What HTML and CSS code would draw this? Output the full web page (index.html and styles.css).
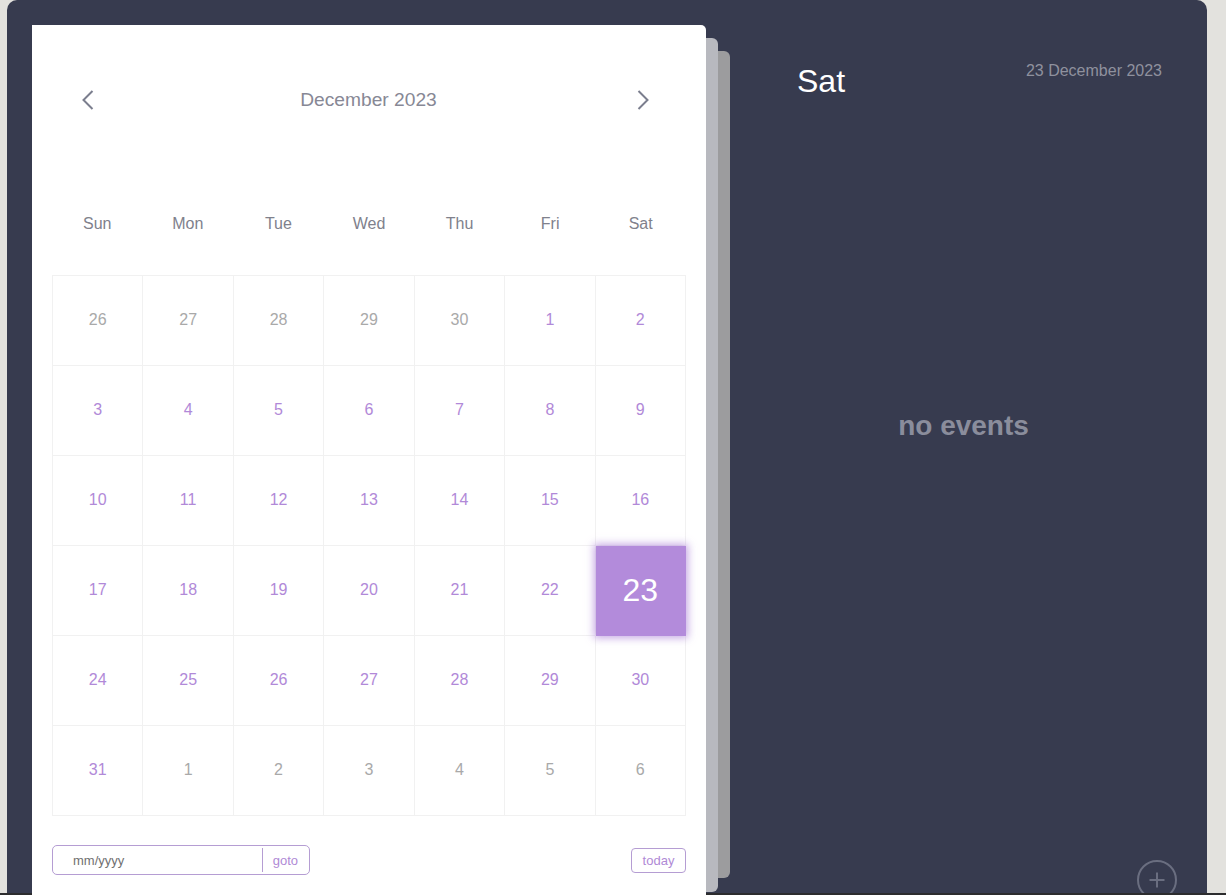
FILE: index.html
```html
<!DOCTYPE html>
<html lang="en">
<head>
<meta charset="utf-8">
<title>Calendar</title>
<link rel="stylesheet" href="styles.css">
</head>
<body>
<div class="app">
  <div class="cal-stack">
    <div class="card">
      <div class="cal-header">
        <button class="nav-btn prev" aria-label="Previous month">
          <svg width="12" height="20" viewBox="0 0 12 20"><path d="M10.5 1 L1.5 10 L10.5 19" fill="none" stroke="#7b7e8e" stroke-width="2"/></svg>
        </button>
        <div class="month-title">December 2023</div>
        <button class="nav-btn next" aria-label="Next month">
          <svg width="12" height="20" viewBox="0 0 12 20"><path d="M1.5 1 L10.5 10 L1.5 19" fill="none" stroke="#7b7e8e" stroke-width="2"/></svg>
        </button>
      </div>
      <div class="weekdays">
        <div>Sun</div><div>Mon</div><div>Tue</div><div>Wed</div><div>Thu</div><div>Fri</div><div>Sat</div>
      </div>
      <div class="days">
        <div class="day other">26</div><div class="day other">27</div><div class="day other">28</div><div class="day other">29</div><div class="day other">30</div><div class="day">1</div><div class="day">2</div>
        <div class="day">3</div><div class="day">4</div><div class="day">5</div><div class="day">6</div><div class="day">7</div><div class="day">8</div><div class="day">9</div>
        <div class="day">10</div><div class="day">11</div><div class="day">12</div><div class="day">13</div><div class="day">14</div><div class="day">15</div><div class="day">16</div>
        <div class="day">17</div><div class="day">18</div><div class="day">19</div><div class="day">20</div><div class="day">21</div><div class="day">22</div><div class="day active">23</div>
        <div class="day">24</div><div class="day">25</div><div class="day">26</div><div class="day">27</div><div class="day">28</div><div class="day">29</div><div class="day">30</div>
        <div class="day">31</div><div class="day other">1</div><div class="day other">2</div><div class="day other">3</div><div class="day other">4</div><div class="day other">5</div><div class="day other">6</div>
      </div>
      <div class="cal-footer">
        <div class="goto-box">
          <input class="goto-input" type="text" placeholder="mm/yyyy">
          <button class="goto-btn">goto</button>
        </div>
        <button class="today-btn">today</button>
      </div>
    </div>
    <div class="page page-1"></div>
    <div class="page page-2"></div>
  </div>
  <div class="panel">
    <div class="panel-header">
      <div class="event-day">Sat</div>
      <div class="event-date">23 December 2023</div>
    </div>
    <div class="no-events">no events</div>
    <button class="add-btn" aria-label="Add event">
      <svg width="40" height="40" viewBox="0 0 40 40"><circle cx="20" cy="20" r="19" fill="none" stroke="#6a6e80" stroke-width="2"/><path d="M12.5 20 H27.5 M20 12.5 V27.5" stroke="#6a6e80" stroke-width="2" fill="none"/></svg>
    </button>
  </div>
</div>
</body>
</html>
```
FILE: styles.css
```css
* { box-sizing: border-box; }
html, body {
  margin: 0;
  padding: 0;
  height: 100%;
  overflow: hidden;
}
body {
  background: #e3e2de;
  font-family: "Liberation Sans", Arial, sans-serif;
}
body::after {
  content: "";
  position: fixed;
  left: 0;
  right: 0;
  bottom: 0;
  height: 2px;
  background: #2c2c2e;
}
button {
  font-family: inherit;
  background: none;
  border: none;
  padding: 0;
  cursor: pointer;
}
.app {
  margin-left: 7px;
  width: 1200px;
  height: 920px;
  background: #373b4f;
  border-radius: 10px 10px 0 0;
  display: flex;
}
.cal-stack {
  display: flex;
  align-items: flex-start;
  padding-left: 25px;
}
.card {
  margin-top: 25px;
  width: 674px;
  height: 900px;
  background: #fff;
  border-radius: 0 5px 0 0;
  padding: 0 20px;
  position: relative;
  z-index: 2;
}
.page {
  width: 12px;
  border-radius: 0 6px 6px 0;
}
.page-1 {
  margin-top: 38px;
  height: 854px;
  background: #b8b9bf;
}
.page-2 {
  margin-top: 51px;
  height: 827px;
  background: #9c9c9e;
}
.cal-header {
  margin-top: 55px;
  height: 40px;
  display: grid;
  grid-template-columns: 1fr auto 1fr;
  align-items: center;
  padding: 0 37px 0 30px;
}
.nav-btn {
  width: 12px;
  height: 20px;
  display: flex;
}
.nav-btn.prev { justify-self: start; }
.nav-btn.next { justify-self: end; }
.month-title {
  font-size: 19.2px;
  color: #878895;
  transform: translateX(3px);
}
.weekdays {
  margin-top: 79px;
  height: 50px;
  margin-bottom: 26px;
  display: grid;
  grid-template-columns: repeat(7, 1fr);
  align-items: center;
  text-align: center;
  font-size: 16px;
  color: #80818c;
}
.days {
  display: grid;
  grid-template-columns: repeat(7, 1fr);
  grid-auto-rows: 90px;
  border-top: 1px solid #f1f1f1;
  border-left: 1px solid #f1f1f1;
}
.day {
  border-right: 1px solid #f1f1f1;
  border-bottom: 1px solid #f1f1f1;
  display: flex;
  align-items: center;
  justify-content: center;
  padding-bottom: 2px;
  font-size: 16px;
  color: #b189d8;
}
.day.other {
  color: #a9a9a9;
}
.day.active {
  padding-bottom: 0;
  background: #b38bdb;
  color: #fff;
  font-size: 32px;
  box-shadow: 0 0 8px 2px rgba(179, 139, 219, 0.75);
  position: relative;
  z-index: 1;
  border-color: #b38bdb;
}
.cal-footer {
  margin-top: 29px;
  display: flex;
  align-items: center;
  justify-content: space-between;
}
.goto-box {
  width: 258px;
  height: 30px;
  border: 1px solid #b59dd3;
  border-radius: 5px;
  display: flex;
  align-items: center;
}
.goto-input {
  flex: 1;
  min-width: 0;
  height: 100%;
  border: none;
  outline: none;
  background: transparent;
  padding: 0 0 0 20px;
  font-family: inherit;
  font-size: 13px;
  color: #6e6e6e;
}
.goto-input::placeholder {
  color: #707070;
}
.goto-btn {
  height: 24px;
  border-left: 1px solid #b59dd3;
  padding: 0 11px 0 10px;
  font-size: 13px;
  color: #b08ad6;
}
.today-btn {
  height: 25px;
  width: 55px;
  border: 1px solid #b59dd3;
  border-radius: 4px;
  font-size: 13px;
  color: #b08ad6;
}
.panel {
  flex: 1;
  display: flex;
  flex-direction: column;
  padding: 63px 0 20px 0;
}
.panel-header {
  display: flex;
  justify-content: space-between;
  align-items: flex-start;
  padding: 0 45px 0 67px;
}
.event-day {
  margin-top: 2px;
  font-size: 32px;
  line-height: 32px;
  color: #fff;
}
.event-date {
  font-size: 16px;
  line-height: 16px;
  color: #8f919e;
}
.no-events {
  margin-top: 315px;
  padding-right: 10px;
  text-align: center;
  font-size: 28px;
  line-height: 28px;
  font-weight: bold;
  color: #8a8d9c;
}
.add-btn {
  margin-top: auto;
  align-self: flex-end;
  margin-right: 30px;
  width: 40px;
  height: 40px;
  display: flex;
}
```
